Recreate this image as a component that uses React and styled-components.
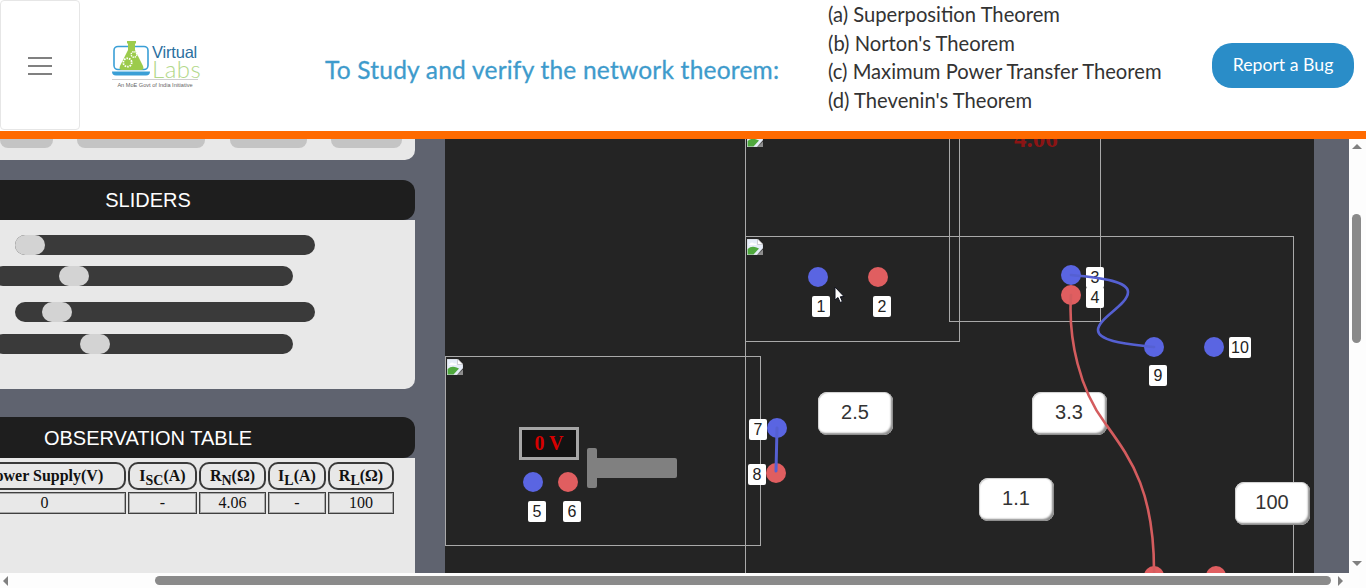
import React from 'react'
import styled, { createGlobalStyle } from 'styled-components'

const LABEL_FONT = '"Liberation Sans", Arial, sans-serif'
const SERIF_FONT = '"Liberation Serif", "Times New Roman", serif'
const HEAD_FONT = 'Lato, "Open Sans", sans-serif'
const BLUE = '#5a65e2'
const RED = '#e05e60'
const BLUE_WIRE = '#5560d2'
const RED_WIRE = '#d45c5e'

// canvas starts here on the page, all canvas data below is in page coordinates
const ORIGIN_X = 445
const ORIGIN_Y = 139

const theorems = [
  '(a) Superposition Theorem',
  "(b) Norton's Theorem",
  '(c) Maximum Power Transfer Theorem',
  "(d) Thevenin's Theorem",
]

const sliders = [
  { left: 15, top: 15, thumb: 0 },
  { left: -7, top: 11, thumb: 66 },
  { left: 15, top: 16, thumb: 27 },
  { left: -7, top: 12, thumb: 87 },
]

const boxes = [
  { x: 745, y: 128, w: 215, h: 214, icon: true },
  { x: 949, y: 128, w: 152, h: 194 },
  { x: 745, y: 236, w: 549, h: 400, icon: true },
  { x: 445, y: 356, w: 316, h: 190, icon: true },
]

const nodes = [
  { x: 818, y: 277, c: BLUE },
  { x: 878, y: 277, c: RED },
  { x: 1071, y: 275, c: BLUE },
  { x: 1071, y: 295, c: RED },
  { x: 533, y: 482, c: BLUE },
  { x: 568, y: 482, c: RED },
  { x: 777, y: 428, c: BLUE },
  { x: 776, y: 473, c: RED },
  { x: 1154, y: 347, c: BLUE },
  { x: 1214, y: 347, c: BLUE },
  { x: 1154, y: 576, c: RED },
  { x: 1216, y: 576, c: RED },
]

const labels = [
  { n: 1, x: 812, y: 296 },
  { n: 2, x: 873, y: 296 },
  { n: 3, x: 1086, y: 267 },
  { n: 4, x: 1086, y: 287 },
  { n: 5, x: 528, y: 501 },
  { n: 6, x: 563, y: 501 },
  { n: 7, x: 749, y: 419 },
  { n: 8, x: 748, y: 464 },
  { n: 9, x: 1149, y: 365 },
  { n: 10, x: 1229, y: 337, w: 22 },
]

const values = [
  { v: '2.5', x: 818, y: 392 },
  { v: '3.3', x: 1032, y: 392 },
  { v: '1.1', x: 979, y: 478 },
  { v: '100', x: 1235, y: 482 },
]

export default function App() {
  return (
    <Page>
      <GlobalStyle />
      <Header>
        <MenuCard>
          <MenuBar />
          <MenuBar />
          <MenuBar />
        </MenuCard>
        <Logo>
          <LogoRow>
            <LogoMark />
            <LogoWords>
              <LogoVirtual>Virtual</LogoVirtual>
              <LogoLabs>Labs</LogoLabs>
            </LogoWords>
          </LogoRow>
          <LogoTag>An MoE Govt of India Initiative</LogoTag>
        </Logo>
        <Title>To Study and verify the network theorem:</Title>
        <TheoremList>
          {theorems.map((t) => (
            <li key={t}>{t}</li>
          ))}
        </TheoremList>
        <BugButton>Report a Bug</BugButton>
      </Header>

      <Middle>
        <Sidebar>
          <ButtonsPanel>
            <StubButton $width={52.5} />
            <StubButton $width={128} />
            <StubButton $width={77} />
            <StubButton $width={71} />
          </ButtonsPanel>

          <PanelTitle $gap={20} $height={40} $line={40}>SLIDERS</PanelTitle>
          <SliderPanel>
            {sliders.map((s, i) => (
              <Track key={i} $left={s.left} $top={s.top}>
                <Thumb $at={s.thumb} />
              </Track>
            ))}
          </SliderPanel>

          <PanelTitle $gap={28} $height={41} $line={42}>OBSERVATION TABLE</PanelTitle>
          <TablePanel>
            <ObservationTable>
              <colgroup>
                <col width="163" />
                <col width="69" />
                <col width="67" />
                <col width="58" />
                <col width="66" />
              </colgroup>
              <thead>
                <tr>
                  <th>Power Supply(V)</th>
                  <th>I<sub>SC</sub>(A)</th>
                  <th>R<sub>N</sub>(Ω)</th>
                  <th>I<sub>L</sub>(A)</th>
                  <th>R<sub>L</sub>(Ω)</th>
                </tr>
              </thead>
              <tbody>
                <tr>
                  <td>0</td>
                  <td>-</td>
                  <td>4.06</td>
                  <td>-</td>
                  <td>100</td>
                </tr>
              </tbody>
            </ObservationTable>
          </TablePanel>
        </Sidebar>

        <Canvas>
          {boxes.map((b) => (
            <Frame key={b.x + '-' + b.y} $x={b.x} $y={b.y} $w={b.w} $h={b.h}>
              {b.icon && <BrokenImage />}
            </Frame>
          ))}

          <ClippedReading>4.06</ClippedReading>

          <VoltDisplay>0 V</VoltDisplay>
          <KnobStem />
          <KnobHandle />

          {labels.map((l) => (
            <NodeLabel key={l.n} $x={l.x} $y={l.y} $w={l.w || 18}>
              {l.n}
            </NodeLabel>
          ))}
          {nodes.map((n) => (
            <Node key={n.x + '-' + n.y} $x={n.x} $y={n.y} $c={n.c} />
          ))}
          {values.map((v) => (
            <ValueBox key={v.v} $x={v.x} $y={v.y}>
              {v.v}
            </ValueBox>
          ))}

          <Wires viewBox="445 139 869 434" width="869" height="434" fill="none" strokeWidth="2.6" strokeLinecap="round">
            <path stroke={RED_WIRE} d="M1071 295 C1068 340 1080 390 1105 423 C1130 458 1155 490 1154 576" />
            <path stroke={BLUE_WIRE} d="M1071 275 C1105 278 1128 282 1128 292 C1128 305 1098 318 1098 330 C1098 342 1130 344 1154 347" />
            <path stroke={BLUE_WIRE} strokeWidth="3" d="M777 428 L776 471" />
          </Wires>

          <Cursor viewBox="0 0 12 18" width="12" height="18">
            <path d="M1 1 L1 14 L4 11.5 L6.2 16.5 L8.4 15.5 L6.3 10.8 L10 10.5 Z" fill="#fff" stroke="#10131f" strokeWidth="1" />
          </Cursor>
        </Canvas>

        <RightGutter />

        <VScroll>
          <ArrowUp />
          <VThumb />
          <ArrowDown />
        </VScroll>
      </Middle>

      <HScroll>
        <ArrowLeft />
        <HThumb />
        <ArrowRight />
      </HScroll>
    </Page>
  )
}

function LogoMark() {
  return (
    <LogoSvg width="40" height="36" viewBox="0 0 40 36" fill="none">
      <rect x="2" y="5.5" width="34" height="23" rx="4" stroke="#3a9fd6" strokeWidth="1.6" />
      <path d="M0 30.5 H38 Q38 34.5 34 34.5 H4 Q0 34.5 0 30.5 Z" fill="#3a9fd6" />
      <path d="M15 0 H24 V2.5 H23 V9 L31 25 Q32.5 29 29 29 H10 Q6.5 29 8 25 L16 9 V2.5 H15 Z" fill="#9ccb4c" />
      <circle cx="15.5" cy="21.5" r="4.2" stroke="#fff" strokeWidth="1.8" strokeDasharray="1.6 1" />
      <circle cx="22" cy="13.5" r="2.8" stroke="#fff" strokeWidth="1.4" strokeDasharray="1.4 0.8" />
    </LogoSvg>
  )
}

function BrokenImage() {
  return (
    <svg width="16" height="16" viewBox="0 0 16 16">
      <path d="M0 0 H10.5 L16 5.5 V9 L10 16 H0 Z" fill="#e6edf8" stroke="#c4c4c4" strokeWidth="0.6" />
      <path d="M10.5 0 V5.5 H16 Z" fill="#fff" stroke="#a8a8a8" strokeWidth="0.5" />
      <path d="M0.6 15.4 V10 Q4.5 6.5 9.5 8.5 L12 9.5 L6.5 15.4 Z" fill="#4fa83d" />
      <path d="M2.5 5 Q5 2.5 7 4.5 H9.5 V6 H2 Z" fill="#fff" />
      <path d="M16 16 H10.5 L16 10.5 Z" fill="#8d8d8d" />
    </svg>
  )
}

const GlobalStyle = createGlobalStyle`
  html, body {
    margin: 0;
    padding: 0;
    overflow: hidden;
    background: #fff;
  }
  * {
    box-sizing: border-box;
  }
`

const Page = styled.div`
  width: 1366px;
  height: 588px;
  display: flex;
  flex-direction: column;
  overflow: hidden;
  background: #5f636f;
`

const Header = styled.header`
  flex: none;
  height: 139px;
  display: flex;
  align-items: flex-start;
  background: #fff;
  border-bottom: 8px solid #ff6a00;
`

const MenuCard = styled.div`
  flex: none;
  width: 80px;
  height: 130px;
  padding-top: 56px;
  display: flex;
  flex-direction: column;
  align-items: center;
  gap: 6px;
  border: 1px solid #e6e6e6;
  border-radius: 4px;
`

const MenuBar = styled.span`
  width: 24px;
  height: 2px;
  background: #808080;
`

const Logo = styled.div`
  flex: none;
  width: 86px;
  margin: 41px 0 0 32px;
  display: flex;
  flex-direction: column;
`

const LogoRow = styled.div`
  display: flex;
  height: 38px;
`

const LogoSvg = styled.svg`
  flex: none;
`

const LogoWords = styled.div`
  display: flex;
  flex-direction: column;
`

const LogoVirtual = styled.span`
  margin-top: 4px;
  font: 400 16.5px/15px ${LABEL_FONT};
  letter-spacing: -0.2px;
  color: #2b6f9f;
`

const LogoLabs = styled.span`
  font: 300 24px/18px Lato, sans-serif;
  letter-spacing: 0.5px;
  color: #b2d88a;
`

const LogoTag = styled.span`
  padding-top: 2px;
  border-top: 1px solid #cfcfcf;
  font: 400 5.6px/7px ${LABEL_FONT};
  color: #666;
  text-align: center;
  white-space: nowrap;
`

const Title = styled.h1`
  flex: none;
  width: 458px;
  margin: 54px 0 0 127px;
  font: 400 24.5px/32px ${HEAD_FONT};
  letter-spacing: 0.22px;
  -webkit-text-stroke: 0.3px #3e9bcc;
  color: #3e9bcc;
  white-space: nowrap;
`

const TheoremList = styled.ul`
  flex: none;
  width: 384px;
  margin: 0 0 0 45px;
  padding: 0;
  list-style: none;
  font: 400 20.2px/28.5px ${HEAD_FONT};
  color: #333;
  white-space: nowrap;
`

const BugButton = styled.button`
  flex: none;
  width: 142px;
  height: 45px;
  margin-top: 43px;
  padding: 0 0 2px;
  border: none;
  border-radius: 20px;
  background: #2a8dc8;
  font: 400 17.7px/43px ${HEAD_FONT};
  color: #fff;
`

const Middle = styled.main`
  flex: none;
  height: 434px;
  display: flex;
`

const Sidebar = styled.aside`
  flex: none;
  width: 415px;
  margin-right: 30px;
  display: flex;
  flex-direction: column;
`

const ButtonsPanel = styled.div`
  flex: none;
  height: 21px;
  display: flex;
  align-items: flex-start;
  gap: 24.5px;
  background: #e8e8e8;
  border-radius: 0 0 10px 0;
`

const StubButton = styled.span`
  flex: none;
  width: ${(p) => p.$width}px;
  height: 9px;
  background: #c4c4c4;
  border-radius: 0 0 8px 8px;
`

const PanelTitle = styled.h2`
  flex: none;
  height: ${(p) => p.$height}px;
  margin: ${(p) => p.$gap}px 0 0;
  padding-right: 119px;
  background: #1e1e1e;
  border-radius: 0 12px 12px 0;
  font: 400 20px/${(p) => p.$line}px ${LABEL_FONT};
  color: #fff;
  text-align: center;
`

const SliderPanel = styled.div`
  flex: none;
  height: 169px;
  background: #e8e8e8;
  border-radius: 0 0 10px 0;
  overflow: hidden;
`

const Track = styled.div`
  width: 300px;
  height: 20px;
  margin-top: ${(p) => p.$top}px;
  margin-left: ${(p) => p.$left}px;
  display: flex;
  background: #3a3a3a;
  border-radius: 10px;
`

const Thumb = styled.span`
  width: 30px;
  height: 20px;
  margin-left: ${(p) => p.$at}px;
  background: #d3d3d3;
  border-radius: 10px;
`

const TablePanel = styled.div`
  flex: 1;
  padding-top: 2px;
  background: #e8e8e8;
  overflow: hidden;
`

const ObservationTable = styled.table`
  margin-left: -39px;
  width: 433px;
  table-layout: fixed;
  border-collapse: separate;
  border-spacing: 2px;
  font-family: ${SERIF_FONT};
  font-size: 16px;
  color: #111;
  text-align: center;

  th {
    height: 28px;
    padding: 0;
    border: 2px solid #3a3a3a;
    border-radius: 10px;
    font-weight: 700;
    line-height: 18px;
    white-space: nowrap;
  }

  sub {
    font-size: 14px;
    line-height: 0;
    vertical-align: -4px;
  }

  td {
    height: 22px;
    padding: 0;
    border: 1px solid #3f3f3f;
    box-shadow: inset 0 0 0 1px #a8a8a8;
    line-height: 18px;
  }
`

const Canvas = styled.section`
  flex: none;
  position: relative;
  width: 869px;
  height: 434px;
  overflow: hidden;
  background: #242424;
`

const Frame = styled.div`
  position: absolute;
  left: ${(p) => p.$x - ORIGIN_X}px;
  top: ${(p) => p.$y - ORIGIN_Y}px;
  width: ${(p) => p.$w}px;
  height: ${(p) => p.$h}px;
  padding: 2px 1px;
  border: 1px solid #a9a9a9;

  svg {
    display: block;
  }
`

const ClippedReading = styled.span`
  position: absolute;
  left: 569px;
  top: -13px;
  font: 700 25px/25px ${SERIF_FONT};
  color: #8c1414;
`

const VoltDisplay = styled.div`
  position: absolute;
  left: 74px;
  top: 288px;
  width: 60px;
  height: 33px;
  border: 3px solid #a6a6a6;
  background: #131313;
  font: 700 20px/27px ${SERIF_FONT};
  color: #d60000;
  text-align: center;
`

const KnobStem = styled.span`
  position: absolute;
  left: 142px;
  top: 309px;
  width: 10px;
  height: 40px;
  border-radius: 2px;
  background: #808080;
`

const KnobHandle = styled.span`
  position: absolute;
  left: 150px;
  top: 319px;
  width: 82px;
  height: 20px;
  border-radius: 2px;
  background: #808080;
`

const NodeLabel = styled.span`
  position: absolute;
  left: ${(p) => p.$x - ORIGIN_X}px;
  top: ${(p) => p.$y - ORIGIN_Y}px;
  width: ${(p) => p.$w}px;
  height: 21px;
  border-radius: 2px;
  background: #fff;
  font: 400 16px/21px ${LABEL_FONT};
  color: #222;
  text-align: center;
`

const Node = styled.span`
  position: absolute;
  left: ${(p) => p.$x - ORIGIN_X - 10}px;
  top: ${(p) => p.$y - ORIGIN_Y - 10}px;
  width: 20px;
  height: 20px;
  border-radius: 50%;
  background: ${(p) => p.$c};
`

const ValueBox = styled.div`
  position: absolute;
  left: ${(p) => p.$x - ORIGIN_X}px;
  top: ${(p) => p.$y - ORIGIN_Y}px;
  width: 75px;
  height: 43px;
  padding-right: 1px;
  border-radius: 9px;
  background: #fff;
  box-shadow: inset -2px -2px 2px #8a8a8a, inset 1px 1px 1px #cfcfcf;
  font: 400 20px/41px ${LABEL_FONT};
  color: #333;
  text-align: center;
`

const Wires = styled.svg`
  position: absolute;
  left: 0;
  top: 0;
`

const Cursor = styled.svg`
  position: absolute;
  left: 389px;
  top: 147px;
`

const RightGutter = styled.div`
  flex: none;
  width: 35px;
`

const VScroll = styled.div`
  flex: none;
  width: 17px;
  padding-right: 2px;
  display: flex;
  flex-direction: column;
  align-items: center;
  background: #fdfdfd;
`

const VThumb = styled.span`
  width: 9px;
  height: 129px;
  margin-top: 65px;
  border-radius: 5px;
  background: #8a8a8a;
`

const ArrowUp = styled.span`
  width: 0;
  height: 0;
  margin-top: 5px;
  border-left: 5px solid transparent;
  border-right: 5px solid transparent;
  border-bottom: 5px solid #808080;
`

const ArrowDown = styled.span`
  width: 0;
  height: 0;
  margin-top: 218px;
  border-left: 5px solid transparent;
  border-right: 5px solid transparent;
  border-top: 5px solid #808080;
`

const HScroll = styled.div`
  flex: none;
  height: 15px;
  display: flex;
  align-items: center;
  background: #fdfdfd;
`

const HThumb = styled.span`
  width: 1176px;
  height: 9px;
  margin-left: 147px;
  border-radius: 5px;
  background: #8a8a8a;
`

const ArrowLeft = styled.span`
  width: 0;
  height: 0;
  margin-left: 3px;
  border-top: 5px solid transparent;
  border-bottom: 5px solid transparent;
  border-right: 5px solid #808080;
`

const ArrowRight = styled.span`
  width: 0;
  height: 0;
  margin-left: 7px;
  border-top: 5px solid transparent;
  border-bottom: 5px solid transparent;
  border-left: 5px solid #808080;
`
